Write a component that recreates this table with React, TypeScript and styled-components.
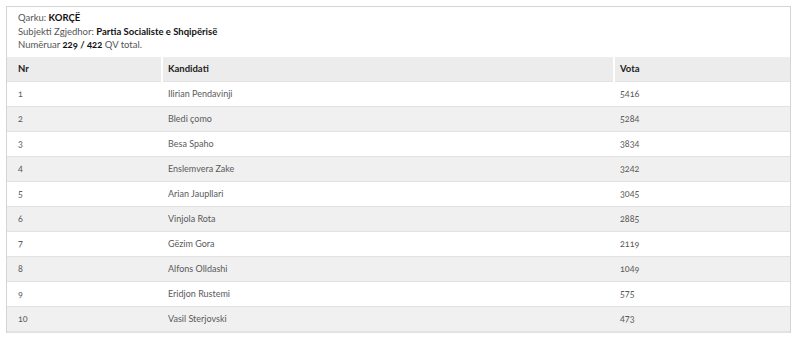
import React from "react";
import styled, { createGlobalStyle } from "styled-components";

const GlobalStyle = createGlobalStyle`
  html, body {
    margin: 0;
    padding: 0;
    background: #fff;
  }
  body {
    font-family: Lato, "Open Sans", "Liberation Sans", sans-serif;
    font-variant-numeric: oldstyle-nums;
  }
`;

interface Candidate {
  nr: number;
  name: string;
  votes: number;
}

const candidates: Candidate[] = [
  { nr: 1, name: "Ilirian Pendavinji", votes: 5416 },
  { nr: 2, name: "Bledi çomo", votes: 5284 },
  { nr: 3, name: "Besa Spaho", votes: 3834 },
  { nr: 4, name: "Enslemvera Zake", votes: 3242 },
  { nr: 5, name: "Arian Jaupllari", votes: 3045 },
  { nr: 6, name: "Vinjola Rota", votes: 2885 },
  { nr: 7, name: "Gëzim Gora", votes: 2119 },
  { nr: 8, name: "Alfons Olldashi", votes: 1049 },
  { nr: 9, name: "Eridjon Rustemi", votes: 575 },
  { nr: 10, name: "Vasil Sterjovski", votes: 473 },
];

export default function App() {
  return (
    <Page>
      <GlobalStyle />
      <Box>
        <Info>
          <InfoLine>
            Qarku: <strong>KORÇË</strong>
          </InfoLine>
          <InfoLine>
            Subjekti Zgjedhor: <strong>Partia Socialiste e Shqipërisë</strong>
          </InfoLine>
          <InfoLine>
            Numëruar <strong>229 / 422</strong> QV total.
          </InfoLine>
        </Info>
        <Table>
          <colgroup>
            <col style={{ width: 155 }} />
            <col style={{ width: 452 }} />
            <col />
          </colgroup>
          <thead>
            <tr>
              <HeadCell first>Nr</HeadCell>
              <HeadCell>Kandidati</HeadCell>
              <HeadCell>Vota</HeadCell>
            </tr>
          </thead>
          <tbody>
            {candidates.map((c) => (
              <Row key={c.nr} striped={c.nr % 2 === 0}>
                <Cell first>{c.nr}</Cell>
                <Cell>{c.name}</Cell>
                <Cell>{c.votes}</Cell>
              </Row>
            ))}
          </tbody>
        </Table>
      </Box>
    </Page>
  );
}

const Page = styled.div`
  padding: 6px 9px 0 6px;
`;

const Box = styled.div`
  border: 1px solid #d4d4d4;
  border-bottom: none;
  background: #fff;
`;

const Info = styled.div`
  padding: 4px 0 5px 11px;
  color: #555;
  font-size: 9.5px;
  line-height: 13.5px;

  strong {
    color: #111;
    font-weight: 700;
  }
`;

const InfoLine = styled.div``;

const Table = styled.table`
  width: 100%;
  border-collapse: collapse;
  table-layout: fixed;
`;

const HeadCell = styled.th<{ first?: boolean }>`
  height: 24px;
  padding: 0 0 0 ${(p) => (p.first ? "11px" : "5px")};
  text-align: left;
  font-size: 9.5px;
  font-weight: 700;
  color: #222;
  background: #ececec;
  border-left: ${(p) => (p.first ? "none" : "2px solid #fff")};
`;

const Row = styled.tr<{ striped: boolean }>`
  background: ${(p) => (p.striped ? "#f0f0f0" : "#fff")};
  border-top: 1px solid #e2e2e2;

  &:last-child {
    border-bottom: 2px solid #e2e2e2;
  }
`;

const Cell = styled.td<{ first?: boolean }>`
  height: 24px;
  padding: 0 0 0 ${(p) => (p.first ? "11px" : "6px")};
  font-size: 9px;
  color: #5a5a5a;
`;
